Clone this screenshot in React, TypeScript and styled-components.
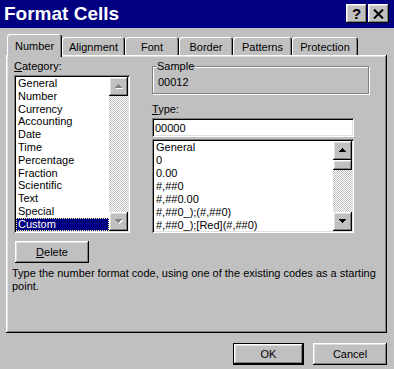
import React from "react";
import styled, { createGlobalStyle, css } from "styled-components";

const GlobalStyle = createGlobalStyle`
  html, body {
    margin: 0;
    padding: 0;
    background: #c0c0c0;
  }
  body {
    font-family: "Liberation Sans", Arial, sans-serif;
    font-size: 11px;
    color: #000;
  }
`;

const raised = css`
  box-shadow: inset -1px -1px #000, inset 1px 1px #fff, inset -2px -2px #808080,
    inset 2px 2px #dfdfdf;
`;

const sunken = css`
  box-shadow: inset 1px 1px #808080, inset -1px -1px #fff, inset 2px 2px #000,
    inset -2px -2px #dfdfdf;
`;

const Window = styled.div`
  width: 394px;
  height: 369px;
  background: #c0c0c0;
  display: flex;
  flex-direction: column;
  overflow: hidden;
`;

const TitleBar = styled.div`
  height: 28px;
  flex-shrink: 0;
  background: #000080;
  display: flex;
  align-items: center;
  justify-content: space-between;
  padding: 0 5px 0 4px;
  box-sizing: border-box;
`;

const Title = styled.h1`
  margin: 0;
  font: bold 19px "Liberation Sans", Arial, sans-serif;
  color: #fff;
`;

const Caps = styled.div`
  display: flex;
  gap: 1px;
  align-self: flex-start;
  margin-top: 4px;
`;

const CapButton = styled.button`
  width: 21px;
  height: 19px;
  padding: 0;
  border: 0;
  background: #c0c0c0;
  ${raised};
  display: flex;
  align-items: center;
  justify-content: center;
  font: bold 15px "Liberation Sans", Arial, sans-serif;
  color: #000;
`;

const Body = styled.div`
  padding: 6px 7px 0 6px;
  display: flex;
  flex-direction: column;
`;

const TabRow = styled.div`
  display: flex;
  align-items: flex-end;
  height: 21px;
  padding-left: 1px;
`;

const Tab = styled.div<{ $w: number; $active?: boolean }>`
  width: ${({ $w }) => $w}px;
  height: ${({ $active }) => ($active ? 23 : 18)}px;
  margin-bottom: ${({ $active }) => ($active ? -2 : 0)}px;
  padding-top: ${({ $active }) => ($active ? 1 : 2)}px;
  position: relative;
  z-index: ${({ $active }) => ($active ? 1 : 0)};
  box-sizing: border-box;
  background: #c0c0c0;
  border-radius: 3px 3px 0 0;
  box-shadow: inset 1px 1px #fff, inset -1px 0 #000, inset -2px 0 #808080;
  display: flex;
  align-items: center;
  justify-content: center;
  white-space: nowrap;
`;

const Panel = styled.div`
  height: 278px;
  box-sizing: border-box;
  padding: 5px 8px 0 6px;
  ${raised};
`;

const Columns = styled.div`
  display: flex;
  gap: 22px;
  margin-left: 2px;
`;

const Column = styled.div<{ $w: number }>`
  width: ${({ $w }) => $w}px;
  display: flex;
  flex-direction: column;
`;

const Label = styled.div<{ $gap?: number }>`
  line-height: 13px;
  margin-top: ${({ $gap }) => $gap ?? 0}px;
  margin-bottom: 2px;
`;

const ListBox = styled.div<{ $w: number; $h: number }>`
  width: ${({ $w }) => $w}px;
  height: ${({ $h }) => $h}px;
  box-sizing: border-box;
  padding: 2px;
  background: #fff;
  ${sunken};
  display: flex;
`;

const Items = styled.ul<{ $row: number }>`
  flex: 1;
  margin: 0;
  padding: 0;
  list-style: none;
  overflow: hidden;

  li {
    height: ${({ $row }) => $row}px;
    line-height: ${({ $row }) => $row}px;
  }
`;

const Item = styled.li<{ $selected?: boolean }>`
  padding-left: 2px;
  white-space: nowrap;
  background: ${({ $selected }) => ($selected ? "#000080" : "transparent")};
  color: ${({ $selected }) => ($selected ? "#fff" : "#000")};
  outline: ${({ $selected }) => ($selected ? "1px dotted #ffffa0" : "none")};
  outline-offset: -1px;
`;

const ScrollBar = styled.div`
  width: 19px;
  display: flex;
  flex-direction: column;
`;

const ScrollButton = styled.div<{ $h?: number }>`
  height: ${({ $h }) => $h ?? 19}px;
  flex-shrink: 0;
  background: #c0c0c0;
  ${raised};
  display: flex;
  align-items: center;
  justify-content: center;
`;

const Track = styled.div`
  flex: 1;
  background-color: #fff;
  background-image: repeating-conic-gradient(#c0c0c0 0% 25%, #fff 0% 50%);
  background-size: 2px 2px;
`;

const Group = styled.fieldset`
  margin: 0;
  padding: 3px 4px 4px 3px;
  border: 1px solid #808080;
  box-shadow: inset 1px 1px #fff, 1px 1px #fff;
  width: 217px;
  box-sizing: border-box;
`;

const Legend = styled.legend`
  padding: 0 1px;
  line-height: 13px;
  background: #c0c0c0;
`;

const SampleValue = styled.div`
  line-height: 13px;
  padding-left: 2px;
`;

const TextBox = styled.input`
  width: 202px;
  height: 19px;
  box-sizing: border-box;
  border: 0;
  margin: 0 0 2px;
  padding: 0 0 0 3px;
  background: #fff;
  ${sunken};
  font: 11px "Liberation Sans", Arial, sans-serif;
  color: #000;
  outline: none;
`;

const PushButton = styled.button<{ $w: number; $default?: boolean; $ml?: number }>`
  width: ${({ $w }) => $w}px;
  height: 22px;
  margin: 0 0 0 ${({ $ml }) => $ml ?? 0}px;
  padding: 0;
  box-sizing: border-box;
  background: #c0c0c0;
  border: ${({ $default }) => ($default ? "1px solid #000" : "0")};
  ${raised};
  font: 11px "Liberation Sans", Arial, sans-serif;
  color: #000;
  display: flex;
  align-items: center;
  justify-content: center;
`;

const DeleteRow = styled.div`
  margin-top: 8px;
`;

const Hint = styled.p`
  margin: 4px 0 0;
  line-height: 13px;
`;

const Footer = styled.div`
  margin-top: 10px;
  display: flex;
  justify-content: flex-end;
  gap: 9px;
`;

function Arrow({ up, disabled }: { up?: boolean; disabled?: boolean }) {
  const d = up
    ? "M4 0h1v1h-1z M3 1h3v1h-3z M2 2h5v1h-5z M1 3h7v1h-7z"
    : "M1 0h7v1h-7z M2 1h5v1h-5z M3 2h3v1h-3z M4 3h1v1h-1z";
  return (
    <svg width="10" height="5" viewBox="0 0 10 5" shapeRendering="crispEdges">
      {disabled && <path d={d} fill="#fff" transform="translate(1 1)" />}
      <path d={d} fill={disabled ? "#808080" : "#000"} />
    </svg>
  );
}

function Scroll({ disabled, thumb }: { disabled?: boolean; thumb?: boolean }) {
  return (
    <ScrollBar>
      <ScrollButton>
        <Arrow up disabled={disabled} />
      </ScrollButton>
      {thumb && <ScrollButton $h={10} />}
      <Track />
      <ScrollButton>
        <Arrow disabled={disabled} />
      </ScrollButton>
    </ScrollBar>
  );
}

const tabs = [
  { name: "Number", w: 55 },
  { name: "Alignment", w: 63 },
  { name: "Font", w: 54 },
  { name: "Border", w: 54 },
  { name: "Patterns", w: 59 },
  { name: "Protection", w: 66 },
];

const categories = [
  "General",
  "Number",
  "Currency",
  "Accounting",
  "Date",
  "Time",
  "Percentage",
  "Fraction",
  "Scientific",
  "Text",
  "Special",
  "Custom",
];

const formats = [
  "General",
  "0",
  "0.00",
  "#,##0",
  "#,##0.00",
  "#,##0_);(#,##0)",
  "#,##0_);[Red](#,##0)",
];

export default function App() {
  return (
    <>
      <GlobalStyle />
      <Window>
        <TitleBar>
          <Title>Format Cells</Title>
          <Caps>
            <CapButton>?</CapButton>
            <CapButton>
              <svg width="11" height="10" viewBox="0 0 11 10">
                <path d="M1 0.5 L10 9.5 M10 0.5 L1 9.5" stroke="#000" strokeWidth="2" />
              </svg>
            </CapButton>
          </Caps>
        </TitleBar>
        <Body>
          <TabRow>
            {tabs.map((t, i) => (
              <Tab key={t.name} $w={t.w} $active={i === 0}>
                {t.name}
              </Tab>
            ))}
          </TabRow>
          <Panel>
            <Columns>
              <Column $w={116}>
                <Label>
                  <u>C</u>ategory:
                </Label>
                <ListBox $w={116} $h={158}>
                  <Items $row={12.8}>
                    {categories.map((c) => (
                      <Item key={c} $selected={c === "Custom"}>
                        {c}
                      </Item>
                    ))}
                  </Items>
                  <Scroll disabled />
                </ListBox>
              </Column>
              <Column $w={217}>
                <Group>
                  <Legend>Sample</Legend>
                  <SampleValue>00012</SampleValue>
                </Group>
                <Label $gap={9}>
                  <u>T</u>ype:
                </Label>
                <TextBox readOnly defaultValue="00000" />
                <ListBox $w={202} $h={94}>
                  <Items $row={13}>
                    {formats.map((f) => (
                      <Item key={f}>{f}</Item>
                    ))}
                  </Items>
                  <Scroll thumb />
                </ListBox>
              </Column>
            </Columns>
            <DeleteRow>
              <PushButton $w={74} $ml={3}>
                <u>D</u>elete
              </PushButton>
            </DeleteRow>
            <Hint>
              Type the number format code, using one of the existing codes as a starting
              point.
            </Hint>
          </Panel>
          <Footer>
            <PushButton $w={71} $default>
              OK
            </PushButton>
            <PushButton $w={74}>Cancel</PushButton>
          </Footer>
        </Body>
      </Window>
    </>
  );
}
